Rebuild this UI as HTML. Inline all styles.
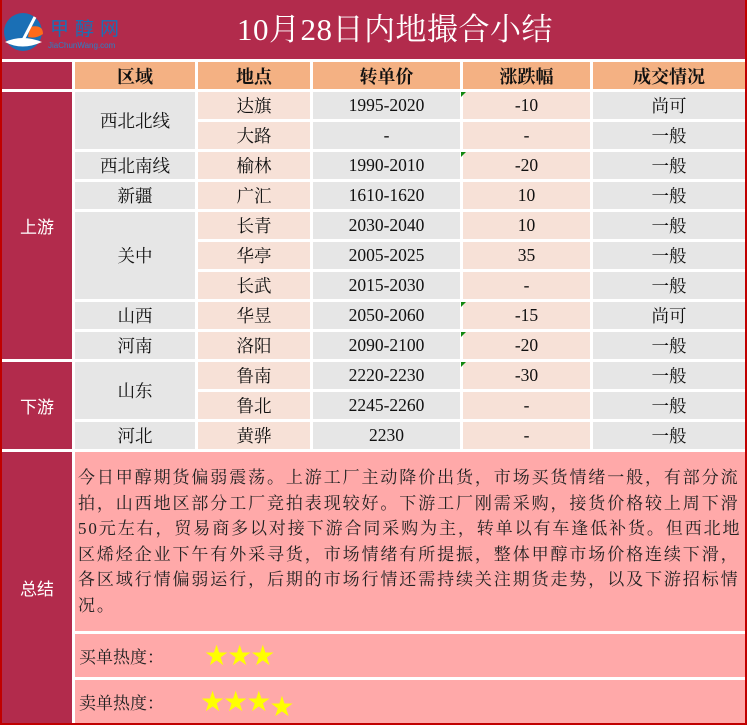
<!DOCTYPE html>
<html><head><meta charset="utf-8"><style>
body{margin:0;width:747px;height:725px;background:#fff;position:relative;overflow:hidden;font-family:"Liberation Serif","Noto Serif CJK SC",serif;}
.a{position:absolute;box-sizing:border-box;display:flex;align-items:center;justify-content:center;font-size:17.5px;color:#111;}
.g{background:#e6e6e6}.p{background:#f7e1d7}.h{background:#f4b183;font-weight:bold;font-size:18px}
.r{background:#b22b4c;color:#fff;font-family:"Liberation Sans","Noto Sans CJK SC",sans-serif;}
.tri{position:absolute;width:0;height:0;border-top:5px solid #118811;border-right:5px solid transparent}
.star{color:#ffff00;font-size:28px;letter-spacing:-2px;font-family:"DejaVu Sans",sans-serif}
</style></head><body>
<div style="position:absolute;left:0;top:0;width:747px;height:725px;border:2px solid #c00000;border-top:0;box-sizing:border-box;"></div>
<div class="a r" style="left:2px;top:0;width:743px;height:59px;"></div>
<div style="position:absolute;left:237px;top:10px;color:#fff;font-family:'Liberation Serif','Noto Serif CJK SC',serif;font-size:31px;line-height:40px;letter-spacing:0.5px">10月28日内地撮合小结</div>
<svg style="position:absolute;left:2px;top:12px" width="130" height="40" viewBox="0 0 130 40">
<circle cx="21" cy="20" r="19" fill="#1a6fb5"/><path d="M3 30 Q20 22 40 30 Q20 39 3 30Z" fill="#fff"/>
<path d="M28 15 Q41 12 41 22 Q34 27 26 25Z" fill="#ff6a1a"/><path d="M33 5 L20 30 L12 30" stroke="#fff" stroke-width="3" fill="none"/>
<text x="48" y="23" font-size="19" fill="#1a6fb5" font-family="Noto Sans CJK SC" letter-spacing="6">甲醇网</text>
<text x="46" y="36" font-size="8" fill="#2a80c5" font-family="Liberation Sans">JiaChunWang.com</text></svg>
<div class="a r" style="left:2px;top:62px;width:70px;height:27px"></div>
<div class="a r" style="left:2px;top:92px;width:70px;height:267px;font-size:17px">上游</div>
<div class="a r" style="left:2px;top:362px;width:70px;height:87px;font-size:17px">下游</div>
<div class="a r" style="left:2px;top:452px;width:70px;height:271px;font-size:17px">总结</div>
<div class="a h" style="left:75px;top:62px;width:120px;height:27px">区域</div>
<div class="a h" style="left:198px;top:62px;width:112px;height:27px">地点</div>
<div class="a h" style="left:313px;top:62px;width:147px;height:27px">转单价</div>
<div class="a h" style="left:463px;top:62px;width:127px;height:27px">涨跌幅</div>
<div class="a h" style="left:593px;top:62px;width:152px;height:27px">成交情况</div>
<div class="a g" style="left:75px;top:92px;width:120px;height:57px">西北北线</div>
<div class="a g" style="left:75px;top:152px;width:120px;height:27px">西北南线</div>
<div class="a g" style="left:75px;top:182px;width:120px;height:27px">新疆</div>
<div class="a g" style="left:75px;top:212px;width:120px;height:87px">关中</div>
<div class="a g" style="left:75px;top:302px;width:120px;height:27px">山西</div>
<div class="a g" style="left:75px;top:332px;width:120px;height:27px">河南</div>
<div class="a g" style="left:75px;top:362px;width:120px;height:57px">山东</div>
<div class="a g" style="left:75px;top:422px;width:120px;height:27px">河北</div>
<div class="a p" style="left:198px;top:92px;width:112px;height:27px">达旗</div><div class="a g" style="left:313px;top:92px;width:147px;height:27px">1995-2020</div><div class="a p" style="left:463px;top:92px;width:127px;height:27px">-10</div><div class="a g" style="left:593px;top:92px;width:152px;height:27px">尚可</div>
<div class="a p" style="left:198px;top:122px;width:112px;height:27px">大路</div><div class="a g" style="left:313px;top:122px;width:147px;height:27px">-</div><div class="a p" style="left:463px;top:122px;width:127px;height:27px">-</div><div class="a g" style="left:593px;top:122px;width:152px;height:27px">一般</div>
<div class="a p" style="left:198px;top:152px;width:112px;height:27px">榆林</div><div class="a g" style="left:313px;top:152px;width:147px;height:27px">1990-2010</div><div class="a p" style="left:463px;top:152px;width:127px;height:27px">-20</div><div class="a g" style="left:593px;top:152px;width:152px;height:27px">一般</div>
<div class="a p" style="left:198px;top:182px;width:112px;height:27px">广汇</div><div class="a g" style="left:313px;top:182px;width:147px;height:27px">1610-1620</div><div class="a p" style="left:463px;top:182px;width:127px;height:27px">10</div><div class="a g" style="left:593px;top:182px;width:152px;height:27px">一般</div>
<div class="a p" style="left:198px;top:212px;width:112px;height:27px">长青</div><div class="a g" style="left:313px;top:212px;width:147px;height:27px">2030-2040</div><div class="a p" style="left:463px;top:212px;width:127px;height:27px">10</div><div class="a g" style="left:593px;top:212px;width:152px;height:27px">一般</div>
<div class="a p" style="left:198px;top:242px;width:112px;height:27px">华亭</div><div class="a g" style="left:313px;top:242px;width:147px;height:27px">2005-2025</div><div class="a p" style="left:463px;top:242px;width:127px;height:27px">35</div><div class="a g" style="left:593px;top:242px;width:152px;height:27px">一般</div>
<div class="a p" style="left:198px;top:272px;width:112px;height:27px">长武</div><div class="a g" style="left:313px;top:272px;width:147px;height:27px">2015-2030</div><div class="a p" style="left:463px;top:272px;width:127px;height:27px">-</div><div class="a g" style="left:593px;top:272px;width:152px;height:27px">一般</div>
<div class="a p" style="left:198px;top:302px;width:112px;height:27px">华昱</div><div class="a g" style="left:313px;top:302px;width:147px;height:27px">2050-2060</div><div class="a p" style="left:463px;top:302px;width:127px;height:27px">-15</div><div class="a g" style="left:593px;top:302px;width:152px;height:27px">尚可</div>
<div class="a p" style="left:198px;top:332px;width:112px;height:27px">洛阳</div><div class="a g" style="left:313px;top:332px;width:147px;height:27px">2090-2100</div><div class="a p" style="left:463px;top:332px;width:127px;height:27px">-20</div><div class="a g" style="left:593px;top:332px;width:152px;height:27px">一般</div>
<div class="a p" style="left:198px;top:362px;width:112px;height:27px">鲁南</div><div class="a g" style="left:313px;top:362px;width:147px;height:27px">2220-2230</div><div class="a p" style="left:463px;top:362px;width:127px;height:27px">-30</div><div class="a g" style="left:593px;top:362px;width:152px;height:27px">一般</div>
<div class="a p" style="left:198px;top:392px;width:112px;height:27px">鲁北</div><div class="a g" style="left:313px;top:392px;width:147px;height:27px">2245-2260</div><div class="a p" style="left:463px;top:392px;width:127px;height:27px">-</div><div class="a g" style="left:593px;top:392px;width:152px;height:27px">一般</div>
<div class="a p" style="left:198px;top:422px;width:112px;height:27px">黄骅</div><div class="a g" style="left:313px;top:422px;width:147px;height:27px">2230</div><div class="a p" style="left:463px;top:422px;width:127px;height:27px">-</div><div class="a g" style="left:593px;top:422px;width:152px;height:27px">一般</div>
<div class="tri" style="left:461px;top:92px"></div><div class="tri" style="left:461px;top:152px"></div><div class="tri" style="left:461px;top:302px"></div><div class="tri" style="left:461px;top:332px"></div><div class="tri" style="left:461px;top:362px"></div>
<div style="position:absolute;left:75px;top:452px;width:670px;height:179px;background:#ffa9a9;box-sizing:border-box;padding:13px 2px 0 3px;font-size:17px;letter-spacing:1.9px;line-height:25.5px;color:#222;">今日甲醇期货偏弱震荡。上游工厂主动降价出货，市场买货情绪一般，有部分流拍，山西地区部分工厂竞拍表现较好。下游工厂刚需采购，接货价格较上周下滑50元左右，贸易商多以对接下游合同采购为主，转单以有车逢低补货。但西北地区烯烃企业下午有外采寻货，市场情绪有所提振，整体甲醇市场价格连续下滑，各区域行情偏弱运行，后期的市场行情还需持续关注期货走势，以及下游招标情况。</div>
<div style="position:absolute;left:75px;top:634px;width:670px;height:43px;background:#ffa9a9;font-size:17px;color:#222;display:flex;align-items:center;padding-left:4px;box-sizing:border-box">买单热度：<span class="star" style="margin-left:40px">★★★</span></div>
<div style="position:absolute;left:75px;top:680px;width:670px;height:43px;background:#ffa9a9;font-size:17px;color:#222;display:flex;align-items:center;padding-left:4px;box-sizing:border-box">卖单热度：<span class="star" style="margin-left:36px">★★★<span style="position:relative;top:5px">★</span></span></div>
</body></html>
